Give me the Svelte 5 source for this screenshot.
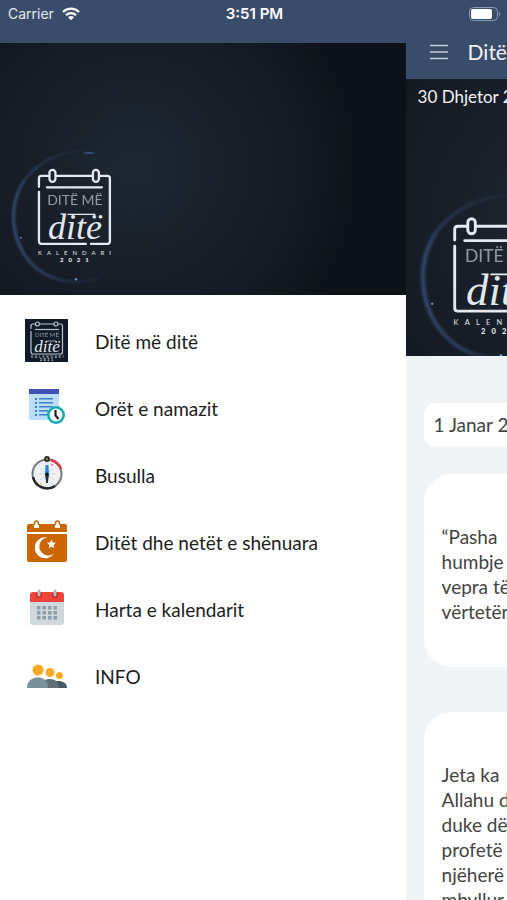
<script>
  const menu = [
    { icon: "logo", label: "Ditë më ditë" },
    { icon: "schedule", label: "Orët e namazit" },
    { icon: "compass", label: "Busulla" },
    { icon: "holiday", label: "Ditët dhe netët e shënuara" },
    { icon: "calendar", label: "Harta e kalendarit" },
    { icon: "people", label: "INFO" }
  ];

  const quotes = [
    ["“Pasha", "humbje", "vepra të", "vërtetën"],
    ["Jeta ka", "Allahu dhe", "duke dë", "profetë", "njëherë", "mbyllur"]
  ];

  let open = $state(true);
</script>

{#snippet mark()}
  <g fill="none" stroke="#e6eaf0" stroke-width="2.3" stroke-linecap="round">
    <path d="M39 144V135.500Q39 133 41.500 133H49M56 133H92M99 133H107.500Q110 133 110 135.500V198.500Q110 201 107.500 201H91M86 201H41.500Q39 201 39 198.500V149" />
    <path d="M47 144.500H102" />
    <rect x="49.500" y="127" width="6" height="12" rx="3" />
    <rect x="93" y="127" width="6" height="12" rx="3" />
    <path d="M68 171.500H95" stroke-width="1.300" />
  </g>
  <text class="thin" x="75" y="162" font-size="14">DITË MË</text>
  <text class="script" x="75" y="196" font-size="36">ditë</text>
  <text class="small" x="38" y="212" font-size="6" letter-spacing="5">KALENDARI</text>
  <text class="year" x="60" y="219" font-size="6" letter-spacing="5">2021</text>
{/snippet}

{#snippet banner(id)}
  <svg class="banner" viewBox="0 0 406 252" preserveAspectRatio="xMidYMid slice" role="img" aria-label="Ditë më ditë, kalendari 2021">
    <defs>
      <radialGradient id="{id}-sky" gradientUnits="userSpaceOnUse" cx="135" cy="125" r="230">
        <stop offset="0" stop-color="#1d2933" />
        <stop offset="0.350" stop-color="#1a212c" />
        <stop offset="0.700" stop-color="#141b24" />
        <stop offset="1" stop-color="#0d1219" />
      </radialGradient>
      <linearGradient id="{id}-ring" x1="0" y1="0.600" x2="1" y2="0.400">
        <stop offset="0" stop-color="#344a70" />
        <stop offset="0.500" stop-color="#30425f" stop-opacity="0.600" />
        <stop offset="0.900" stop-color="#2c3d58" stop-opacity="0" />
      </linearGradient>
      <filter id="{id}-glow" x="-20%" y="-20%" width="140%" height="140%">
        <feGaussianBlur stdDeviation="1.200" />
      </filter>
    </defs>
    <rect width="406" height="252" fill="url(#{id}-sky)" />
    <g fill="none" stroke="url(#{id}-ring)" filter="url(#{id}-glow)">
      <path d="M98 109C52 103 13 132 13 173C13 212 42 239 76 239C92 239 104 234 114 227" stroke-width="2" />
      <path d="M24 138C7 164 11 204 37 226C47 234 60 238 72 239" stroke-width="3" />
    </g>
    <ellipse cx="89" cy="110" rx="6" ry="1" fill="#3d5f90" opacity="0.700" />
    <circle cx="76" cy="236.500" r="1.200" fill="#6d93cc" />
    <circle cx="21" cy="195" r="1" fill="#6a83ac" />
    {@render mark()}
  </svg>
{/snippet}

{#snippet icon(name)}
  <svg class="icon" viewBox="0 0 44 44" aria-hidden="true">
    {#if name === "logo"}
      <rect x="0" y="0" width="43" height="43" fill="#0f1c28" />
      <g fill="none" stroke="#b9c3cc" stroke-width="1.200">
        <path d="M6 10V7Q6 5 8 5H10.500M14.500 5H29M33 5H35.500Q37.500 5 37.500 7V33Q37.500 35 35.500 35H8Q6 35 6 33V12" />
        <circle cx="12.500" cy="5" r="2" />
        <circle cx="31" cy="5" r="2" />
        <path d="M10 10.500H34" />
        <path d="M21 22H31" stroke-width="0.800" />
      </g>
      <text class="thin" x="22" y="18" font-size="6">DITË MË</text>
      <text class="script" x="22" y="33" font-size="17">ditë</text>
      <text class="small" x="6" y="39" font-size="3" letter-spacing="2">KALENDARI</text>
      <text class="year" x="15" y="42" font-size="3" letter-spacing="2">2021</text>
    {:else if name === "schedule"}
      <rect x="4" y="4" width="30" height="30" fill="#bbdefb" />
      <path d="M4 3H34V8H4Z" fill="#3f51b5" />
      <g fill="#3f7fd0">
        {#each [12, 16, 20, 24, 28] as y}
          <rect x="10" {y} width="2" height="2" />
          <rect x="14" {y} width={y > 20 ? 9 : 14} height="1.500" />
        {/each}
      </g>
      <circle cx="31" cy="29" r="9" fill="#12a9b5" />
      <circle cx="31" cy="29" r="6.500" fill="#f2f4f5" />
      <path d="M30.500 24V29.500L33.500 33" fill="none" stroke="#111" stroke-width="2" />
    {:else if name === "compass"}
      <circle cx="22" cy="21" r="14.500" fill="#f1f3f6" stroke="#77797d" stroke-width="2" />
      <path d="M8 24A14.500 14.500 0 0 0 30 33" fill="none" stroke="#242629" stroke-width="2.400" />
      <path d="M26 7A14.500 14.500 0 0 1 36 16" fill="none" stroke="#dc3545" stroke-width="2.400" />
      <circle cx="22" cy="21" r="11.500" fill="none" stroke="#c5cad2" stroke-width="1" stroke-dasharray="1 2" />
      <path d="M22 12V31M13 21H31M15 15L29 27M29 15L15 27" stroke="#c3c7ce" stroke-width="0.700" />
      <path d="M20.500 12H23.500L24 21H20Z" fill="#2d83df" />
      <path d="M20 21H24L22.800 30H21.200Z" fill="#24303d" />
      <circle cx="22" cy="21" r="1.500" fill="#111" />
      <circle cx="22" cy="6" r="3" fill="#33302c" />
      <circle cx="22" cy="6" r="1" fill="#a59668" />
      <circle cx="27" cy="12" r="1" fill="#e66b7b" />
      <circle cx="16" cy="31" r="1" fill="#e2d34f" />
    {:else if name === "holiday"}
      <path d="M2 12V6Q2 4 4 4H9V8H14V4H30V8H35V4H40Q42 4 42 6V12Z" fill="#cc6600" />
      <path d="M2 14H42V40Q42 42 40 42H4Q2 42 2 40Z" fill="#cc6600" />
      <path d="M9.500 5V3.500Q9.500 1 11.500 1T13.500 3.500V5M30.500 5V3.500Q30.500 1 32.500 1T34.500 3.500V5" fill="none" stroke="#cc6600" stroke-width="1.500" />
      <path d="M10.500 3.500H12.500V8H10.500ZM31.500 3.500H33.500V8H31.500Z" fill="#fff" />
      <path d="M22.500 17.500A10.500 10.500 0 1 0 29 33.500A9 9 0 1 1 22.500 17.500Z" fill="#fff" />
      <path d="M26.500 19.500L27.800 22.500L31 22.800L28.600 25L29.300 28.200L26.500 26.500L23.700 28.200L24.400 25L22 22.800L25.200 22.500Z" fill="#fff" />
    {:else if name === "calendar"}
      <path d="M5 14H39V35Q39 38 36 38H8Q5 38 5 35Z" fill="#cfd8dc" />
      <path d="M5 15V8Q5 5 8 5H36Q39 5 39 8V15Z" fill="#f0443a" />
      <circle cx="14" cy="8" r="3" fill="#b42d27" />
      <circle cx="30" cy="8" r="3" fill="#b42d27" />
      <path d="M14 4V8M30 4V8" stroke="#b0bec5" stroke-width="3" stroke-linecap="round" />
      <g fill="#8b9ea9">
        {#each [19, 24, 29] as y}
          {#each [12, 17.5, 23, 28.5] as x}
            <rect {x} {y} width="3.500" height="3.500" />
          {/each}
        {/each}
      </g>
    {:else}
      <path d="M25 34C25 28 29 27 33 27C38 27 42 29 42 34Z" fill="#455a64" />
      <path d="M15 34C15 27 20 25 25 25C30 25 34 28 34 34Z" fill="#607078" />
      <path d="M2 34C2 26 8 23.500 13 23.500C18 23.500 23 26 23 34Z" fill="#78909c" />
      <circle cx="13" cy="16" r="5.500" fill="#ffa726" />
      <circle cx="25" cy="18.500" r="4.500" fill="#ffa726" />
      <circle cx="34.500" cy="21.500" r="3.500" fill="#ffa726" />
    {/if}
  </svg>
{/snippet}

<div class="app">
  <div class="status">
    <div class="carrier">
      <span>Carrier</span>
      <svg width="18" height="14" viewBox="0 0 18 14" aria-label="Wi-Fi" role="img">
        <g fill="none" stroke="#fff" stroke-width="2.300">
          <path d="M1 5C5.500 0.500 12.500 0.500 17 5" />
          <path d="M4 8.300C6.800 5.500 11.200 5.500 14 8.300" />
        </g>
        <path d="M6 10.300C7.800 8.600 10.200 8.600 12 10.300L9 13.300Z" fill="#fff" />
      </svg>
    </div>
    <time>3:51 PM</time>
    <svg class="battery" width="32" height="14" viewBox="0 0 32 14" aria-label="Battery" role="img">
      <rect x="0.500" y="0.500" width="28" height="13" rx="4" fill="none" stroke="#8c9ab0" />
      <rect x="2" y="2" width="21" height="10" rx="2" fill="#fff" />
      <path d="M30 4.500Q32 7 30 9.500Z" fill="#8c9ab0" />
    </svg>
  </div>

  <div class="screens">
    {#if open}
      <aside>
        {@render banner("drawer")}
        <nav>
          {#each menu as item}
            <a href="#{item.icon}">
              {@render icon(item.icon)}
              <span>{item.label}</span>
            </a>
          {/each}
        </nav>
      </aside>
    {/if}

    <main>
      <header>
        <button aria-label="Menu" onclick={() => (open = !open)}>
          <svg width="18" height="16" viewBox="0 0 18 16">
            <path d="M0 1.500H18M0 8H18M0 14.500H18" stroke="#c6d0de" stroke-width="1.500" />
          </svg>
        </button>
        <h1>Ditë më ditë</h1>
      </header>
      <div class="hero">
        {@render banner("page")}
        <p class="today">30 Dhjetor 2020</p>
      </div>
      <section>
        <h2>1 Janar 2021</h2>
        {#each quotes as quote}
          <article>
            {#each quote as line}
              <p>{line}</p>
            {/each}
          </article>
        {/each}
      </section>
    </main>
  </div>
</div>

<style>
  :global(body) {
    margin: 0;
  }
  .app {
    display: flex;
    flex-direction: column;
    height: 100vh;
    overflow: hidden;
    background: #394c69;
    font-family: Lato, "Open Sans", sans-serif;
  }
  .status {
    display: grid;
    grid-template-columns: 1fr auto 1fr;
    align-items: center;
    box-sizing: border-box;
    height: 43px;
    padding: 0 6px 16px 8px;
    color: #fff;
    font-family: Inter, sans-serif;
    font-size: 14px;
  }
  .carrier {
    display: flex;
    align-items: center;
    gap: 8px;
    color: #e4e9f0;
  }
  time {
    font-weight: 600;
    font-size: 15px;
  }
  .battery {
    justify-self: end;
  }
  .screens {
    display: flex;
    flex: 1;
    min-height: 0;
  }
  aside {
    flex: 0 0 80%;
    background: #fff;
  }
  .banner {
    display: block;
    width: 100%;
    background: #10161e;
  }
  .banner text,
  .icon text {
    fill: #e3e8ee;
  }
  .thin {
    text-anchor: middle;
    opacity: 0.6;
  }
  .script {
    font-family: "Liberation Serif", serif;
    font-style: italic;
    text-anchor: middle;
  }
  .year {
    font-weight: 900;
  }
  nav {
    display: flex;
    flex-direction: column;
    padding-top: 13px;
  }
  nav a {
    display: flex;
    align-items: center;
    gap: 26px;
    height: 67px;
    padding-left: 25px;
    color: #1c1c1c;
    font-size: 19px;
    text-decoration: none;
  }
  .icon {
    flex: none;
    width: 44px;
    height: 44px;
  }
  main {
    flex: 0 0 100%;
    overflow: hidden;
    background: #f1f4f7;
  }
  header {
    display: flex;
    align-items: center;
    gap: 20px;
    box-sizing: border-box;
    height: 36px;
    padding: 0 24px 18px;
    background: #394c69;
    color: #f0f3f7;
  }
  button {
    display: flex;
    padding: 0;
    border: 0;
    background: none;
  }
  h1 {
    margin: 0;
    font-size: 21px;
    font-weight: 400;
    line-height: 20px;
  }
  .hero {
    position: relative;
  }
  .hero .banner {
    height: 277px;
  }
  .today {
    position: absolute;
    top: 8px;
    left: 12px;
    margin: 0;
    color: #f0f3f7;
    font-size: 17px;
    line-height: 20px;
  }
  section {
    padding: 47px 18px;
  }
  h2 {
    margin: 0 0 27px;
    padding: 10px;
    border-radius: 12px;
    background: #fff;
    color: #43433f;
    font-size: 19px;
    font-weight: 400;
    line-height: 24px;
  }
  article {
    margin-bottom: 45px;
    padding: 50px 18px 43px;
    border-radius: 28px;
    background: #fff;
    color: #43433f;
    font-size: 19px;
    line-height: 25px;
  }
  article p {
    margin: 0;
  }
</style>
